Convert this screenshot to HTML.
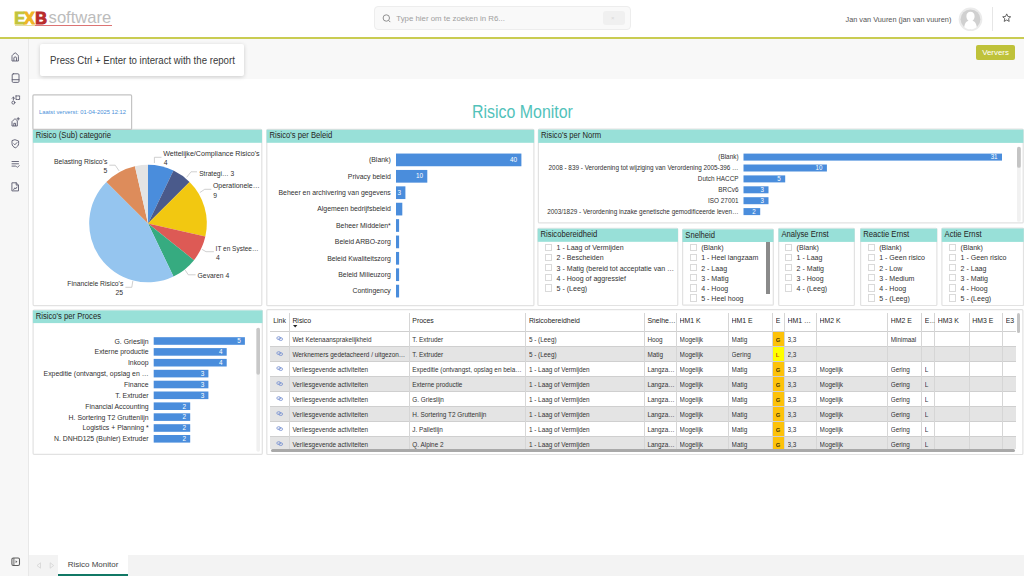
<!DOCTYPE html>
<html><head><meta charset="utf-8">
<style>
*{box-sizing:border-box;margin:0;padding:0}
html,body{width:1024px;height:576px;overflow:hidden;background:#fff;font-family:"Liberation Sans",sans-serif;color:#252423}
.a{position:absolute}
#hdr{left:0;top:0;width:1024px;height:38px;background:#fff}
#gline{left:0;top:37.3px;width:1024px;height:1.6px;background:#c9cc52}
#side{left:0;top:39px;width:29px;height:537px;background:#f7f7f7;border-right:1px solid #e8e8e8}
#band{left:29px;top:39px;width:995px;height:40px;background:#f8f8f8}
#tip{left:40px;top:44px;width:204px;height:32px;background:#fff;box-shadow:0 1px 4px rgba(0,0,0,.18);border-radius:2px;font-size:11px;color:#3a3a3a;line-height:32px;padding-left:9.6px;padding-top:0px;white-space:nowrap}
#btm{left:29px;top:555px;width:995px;height:21px;background:#f3f3f3}
#tab{left:58px;top:555px;width:70px;height:21px;background:#fff;border-bottom:2px solid #117865;font-size:8px;color:#444;text-align:center;line-height:20px}
.pnl{position:absolute;background:#fff;border:1px solid #e3e3e3;}
.ph{position:absolute;left:-1px;top:-1px;right:-1px;height:13.5px;background:#98e0d8;font-size:7.8px;color:#252423;line-height:13.5px;padding-left:2.4px;white-space:nowrap}
.th{font-size:6.9px;color:#252423;white-space:nowrap;overflow:hidden;line-height:12px;height:14px}
.td{font-size:6.4px;color:#333;white-space:nowrap;overflow:hidden;line-height:18.6px;height:15px}
.cb{width:7.3px;height:7.3px;border:1px solid #dadada;background:#fff}
.si{font-size:7.05px;color:#333;white-space:nowrap;line-height:10px}
</style></head><body>
<div id="hdr" class="a"></div>
<div id="gline" class="a"></div>
<div id="side" class="a"></div>
<div id="band" class="a"></div>
<div id="tip" class="a"><span style="display:inline-block;transform:scaleX(0.875);transform-origin:0 50%">Press Ctrl + Enter to interact with the report</span></div>
<div id="btm" class="a"></div>
<div id="tab" class="a">Risico Monitor</div>

<svg class="a" style="left:0;top:0" width="1024" height="576" font-family="Liberation Sans, sans-serif"><rect x="33.10" y="129.40" width="228.70" height="176.20" fill="#fff" stroke="#e2e2e2" stroke-width="1.2" rx="1"/>
<rect x="32.90" y="129.80" width="229.10" height="13.00" fill="#98e0d8"/>
<text x="35.8" y="138.1" font-size="8.30" text-anchor="start" fill="#252423"  textLength="75.26" lengthAdjust="spacingAndGlyphs">Risico (Sub) categorie</text>
<rect x="266.80" y="129.40" width="267.10" height="176.30" fill="#fff" stroke="#e2e2e2" stroke-width="1.2" rx="1"/>
<rect x="266.60" y="129.80" width="267.50" height="13.00" fill="#98e0d8"/>
<text x="269.5" y="138.1" font-size="8.30" text-anchor="start" fill="#252423"  textLength="62.69" lengthAdjust="spacingAndGlyphs">Risico's per Beleid</text>
<rect x="538.40" y="129.20" width="484.80" height="93.70" fill="#fff" stroke="#e2e2e2" stroke-width="1.2" rx="1"/>
<rect x="538.20" y="129.60" width="485.20" height="13.30" fill="#98e0d8"/>
<text x="541.1" y="138.1" font-size="8.30" text-anchor="start" fill="#252423"  textLength="60.12" lengthAdjust="spacingAndGlyphs">Risico's per Norm</text>
<rect x="537.90" y="228.25" width="139.85" height="77.25" fill="#fff" stroke="#e2e2e2" stroke-width="1.2" rx="1"/>
<rect x="537.70" y="228.65" width="140.25" height="13.15" fill="#98e0d8"/>
<text x="540.6" y="237.1" font-size="8.30" text-anchor="start" fill="#252423"  textLength="56.56" lengthAdjust="spacingAndGlyphs">Risicobereidheid</text>
<rect x="682.60" y="229.00" width="90.70" height="76.20" fill="#fff" stroke="#e2e2e2" stroke-width="1.2" rx="1"/>
<rect x="682.40" y="229.40" width="91.10" height="12.60" fill="#98e0d8"/>
<text x="685.3" y="237.5" font-size="8.30" text-anchor="start" fill="#252423"  textLength="29.77" lengthAdjust="spacingAndGlyphs">Snelheid</text>
<rect x="778.70" y="228.25" width="75.70" height="77.25" fill="#fff" stroke="#e2e2e2" stroke-width="1.2" rx="1"/>
<rect x="778.50" y="228.65" width="76.10" height="13.25" fill="#98e0d8"/>
<text x="781.4" y="237.1" font-size="8.30" text-anchor="start" fill="#252423"  textLength="47.2" lengthAdjust="spacingAndGlyphs">Analyse Ernst</text>
<rect x="860.60" y="228.25" width="76.30" height="77.25" fill="#fff" stroke="#e2e2e2" stroke-width="1.2" rx="1"/>
<rect x="860.40" y="228.65" width="76.70" height="13.25" fill="#98e0d8"/>
<text x="863.3" y="237.1" font-size="8.30" text-anchor="start" fill="#252423"  textLength="45.92" lengthAdjust="spacingAndGlyphs">Reactie Ernst</text>
<rect x="941.90" y="228.10" width="81.60" height="77.40" fill="#fff" stroke="#e2e2e2" stroke-width="1.2" rx="1"/>
<rect x="941.70" y="228.50" width="82.00" height="13.40" fill="#98e0d8"/>
<text x="944.6" y="237.0" font-size="8.30" text-anchor="start" fill="#252423"  textLength="36.99" lengthAdjust="spacingAndGlyphs">Actie Ernst</text>
<rect x="33.10" y="310.00" width="229.20" height="144.30" fill="#fff" stroke="#e2e2e2" stroke-width="1.2" rx="1"/>
<rect x="32.90" y="310.40" width="229.60" height="12.70" fill="#98e0d8"/>
<text x="35.8" y="318.6" font-size="8.30" text-anchor="start" fill="#252423"  textLength="65.23" lengthAdjust="spacingAndGlyphs">Risico's per Proces</text>
<rect x="266.80" y="309.70" width="756.10" height="144.80" fill="#fff" stroke="#e2e2e2" stroke-width="1.2" rx="1"/>
<rect x="32.9" y="94.9" width="98.7" height="34.5" fill="#fff" stroke="#c4c4c4" stroke-width="1.2" rx="1"/>
<path d="M148 223.5L148.00 164.70A58.8 58.8 0 0 1 173.51 170.52Z" fill="#4a8ddc"/>
<path d="M148 223.5L173.51 170.52A58.8 58.8 0 0 1 189.58 181.92Z" fill="#4a5a8b"/>
<path d="M148 223.5L189.58 181.92A58.8 58.8 0 0 1 205.33 236.58Z" fill="#f2c811"/>
<path d="M148 223.5L205.33 236.58A58.8 58.8 0 0 1 193.97 260.16Z" fill="#dd5a55"/>
<path d="M148 223.5L193.97 260.16A58.8 58.8 0 0 1 173.51 276.48Z" fill="#36ab80"/>
<path d="M148 223.5L173.51 276.48A58.8 58.8 0 0 1 106.42 181.92Z" fill="#95c5ef"/>
<path d="M148 223.5L106.42 181.92A58.8 58.8 0 0 1 134.92 166.17Z" fill="#dd8c5b"/>
<path d="M148 223.5L134.92 166.17A58.8 58.8 0 0 1 148.00 164.70Z" fill="#e4e4e4"/>
<polyline points="109.3,165.2 115.2,165.2 119.1,170.9" fill="none" stroke="#bbb" stroke-width="0.7"/>
<polyline points="154.4,163 154.4,157.3 161.5,157.3" fill="none" stroke="#bbb" stroke-width="0.7"/>
<polyline points="186.7,177.3 191,171.8 197,171.8" fill="none" stroke="#bbb" stroke-width="0.7"/>
<polyline points="199.8,192.6 204.7,189.3 211.3,189.3" fill="none" stroke="#bbb" stroke-width="0.7"/>
<polyline points="201.9,249.3 206,251.7 213.9,251.7" fill="none" stroke="#bbb" stroke-width="0.7"/>
<polyline points="185.2,270.1 188.3,274.8 195.6,274.8" fill="none" stroke="#bbb" stroke-width="0.7"/>
<polyline points="132.8,281 131.8,287.3 125.4,287.3" fill="none" stroke="#bbb" stroke-width="0.7"/>
<text x="107.4" y="164.0" font-size="7.81" text-anchor="end" fill="#303030"  textLength="53.4" lengthAdjust="spacingAndGlyphs">Belasting Risico's</text>
<text transform="translate(107.40 172.80) scale(0.9091 1)" font-size="7.48" text-anchor="end" fill="#303030" >5</text>
<text x="163.2" y="155.9" font-size="7.81" text-anchor="start" fill="#303030"  textLength="96.4" lengthAdjust="spacingAndGlyphs">Wettelijke/Compliance Risico's</text>
<text transform="translate(163.70 165.20) scale(0.9091 1)" font-size="7.48" text-anchor="start" fill="#303030" >4</text>
<text x="199.2" y="176.0" font-size="7.81" text-anchor="start" fill="#303030"  textLength="35" lengthAdjust="spacingAndGlyphs">Strategi… 3</text>
<text x="212.9" y="187.9" font-size="7.81" text-anchor="start" fill="#303030"  textLength="46.8" lengthAdjust="spacingAndGlyphs">Operationele…</text>
<text transform="translate(213.20 197.50) scale(0.9091 1)" font-size="7.48" text-anchor="start" fill="#303030" >9</text>
<text x="215.6" y="250.8" font-size="7.81" text-anchor="start" fill="#303030"  textLength="42.8" lengthAdjust="spacingAndGlyphs">IT en Systee…</text>
<text transform="translate(215.90 259.70) scale(0.9091 1)" font-size="7.48" text-anchor="start" fill="#303030" >4</text>
<text x="197.6" y="277.9" font-size="7.81" text-anchor="start" fill="#303030"  textLength="31.7" lengthAdjust="spacingAndGlyphs">Gevaren 4</text>
<text x="123.3" y="285.9" font-size="7.81" text-anchor="end" fill="#303030"  textLength="56" lengthAdjust="spacingAndGlyphs">Financiele Risico's</text>
<text transform="translate(123.00 294.70) scale(0.9091 1)" font-size="7.48" text-anchor="end" fill="#303030" >25</text>
<rect x="396" y="153.55" width="125.4" height="12.7" fill="#4a8ddc"/>
<text transform="translate(390.80 162.20) scale(0.9091 1)" font-size="7.59" text-anchor="end" fill="#303030" >(Blank)</text>
<text transform="translate(517.10 162.00) scale(0.9091 1)" font-size="7.04" text-anchor="end" fill="#fff" >40</text>
<rect x="396" y="169.95" width="31.3" height="12.7" fill="#4a8ddc"/>
<text transform="translate(390.80 178.60) scale(0.9091 1)" font-size="7.59" text-anchor="end" fill="#303030" >Privacy beleid</text>
<text transform="translate(423.05 178.40) scale(0.9091 1)" font-size="7.04" text-anchor="end" fill="#fff" >10</text>
<rect x="396" y="186.35" width="9.4" height="12.7" fill="#4a8ddc"/>
<text transform="translate(390.80 195.00) scale(0.9091 1)" font-size="7.59" text-anchor="end" fill="#303030" >Beheer en archivering van gegevens</text>
<text transform="translate(401.10 194.80) scale(0.9091 1)" font-size="7.04" text-anchor="end" fill="#fff" >3</text>
<rect x="396" y="202.75" width="6.3" height="12.7" fill="#4a8ddc"/>
<text transform="translate(390.80 211.40) scale(0.9091 1)" font-size="7.59" text-anchor="end" fill="#303030" >Algemeen bedrijfsbeleid</text>
<rect x="396" y="219.15" width="3.1" height="12.7" fill="#4a8ddc"/>
<text transform="translate(390.80 227.80) scale(0.9091 1)" font-size="7.59" text-anchor="end" fill="#303030" >Beheer Middelen*</text>
<rect x="396" y="235.55" width="3.1" height="12.7" fill="#4a8ddc"/>
<text transform="translate(390.80 244.20) scale(0.9091 1)" font-size="7.59" text-anchor="end" fill="#303030" >Beleid ARBO-zorg</text>
<rect x="396" y="251.95" width="3.1" height="12.7" fill="#4a8ddc"/>
<text transform="translate(390.80 260.60) scale(0.9091 1)" font-size="7.59" text-anchor="end" fill="#303030" >Beleid Kwaliteitszorg</text>
<rect x="396" y="268.35" width="3.1" height="12.7" fill="#4a8ddc"/>
<text transform="translate(390.80 277.00) scale(0.9091 1)" font-size="7.59" text-anchor="end" fill="#303030" >Beleid Milieuzorg</text>
<rect x="396" y="284.75" width="3.1" height="12.7" fill="#4a8ddc"/>
<text transform="translate(390.80 293.40) scale(0.9091 1)" font-size="7.59" text-anchor="end" fill="#303030" >Contingency</text>
<rect x="743.5" y="153.6" width="258.5" height="7" fill="#4a8ddc"/>
<text transform="translate(738.50 159.40) scale(0.9091 1)" font-size="7.02" text-anchor="end" fill="#303030" >(Blank)</text>
<text transform="translate(997.54 159.30) scale(0.9091 1)" font-size="6.82" text-anchor="end" fill="#fff" >31</text>
<rect x="743.5" y="164.5" width="83.4" height="7" fill="#4a8ddc"/>
<text transform="translate(738.50 170.30) scale(0.9091 1)" font-size="7.02" text-anchor="end" fill="#303030" >2008 - 839 - Verordening tot wijziging van Verordening 2005-396 …</text>
<text transform="translate(822.40 170.20) scale(0.9091 1)" font-size="6.82" text-anchor="end" fill="#fff" >10</text>
<rect x="743.5" y="175.4" width="41.7" height="7" fill="#4a8ddc"/>
<text transform="translate(738.50 181.20) scale(0.9091 1)" font-size="7.02" text-anchor="end" fill="#303030" >Dutch HACCP</text>
<text transform="translate(780.70 181.10) scale(0.9091 1)" font-size="6.82" text-anchor="end" fill="#fff" >5</text>
<rect x="743.5" y="186.3" width="25.0" height="7" fill="#4a8ddc"/>
<text transform="translate(738.50 192.10) scale(0.9091 1)" font-size="7.02" text-anchor="end" fill="#303030" >BRCv6</text>
<text transform="translate(764.02 192.00) scale(0.9091 1)" font-size="6.82" text-anchor="end" fill="#fff" >3</text>
<rect x="743.5" y="197.2" width="25.0" height="7" fill="#4a8ddc"/>
<text transform="translate(738.50 203.00) scale(0.9091 1)" font-size="7.02" text-anchor="end" fill="#303030" >ISO 27001</text>
<text transform="translate(764.02 202.90) scale(0.9091 1)" font-size="6.82" text-anchor="end" fill="#fff" >3</text>
<rect x="743.5" y="208.1" width="16.7" height="7" fill="#4a8ddc"/>
<text transform="translate(738.50 213.90) scale(0.9091 1)" font-size="7.02" text-anchor="end" fill="#303030" >2003/1829 - Verordening inzake genetische gemodificeerde leven…</text>
<text transform="translate(755.68 213.80) scale(0.9091 1)" font-size="6.82" text-anchor="end" fill="#fff" >2</text>
<rect x="1017" y="146.8" width="3.8" height="75" rx="1.9" fill="#f1f1f1"/>
<rect x="1017" y="146.8" width="3.8" height="21" rx="1.9" fill="#c4c4c4"/>
<rect x="153.7" y="337.2" width="91.2" height="7.6" fill="#4a8ddc"/>
<text transform="translate(148.60 343.50) scale(0.9091 1)" font-size="7.59" text-anchor="end" fill="#303030" >G. Grieslijn</text>
<text transform="translate(240.70 343.30) scale(0.9091 1)" font-size="7.04" text-anchor="end" fill="#fff" >5</text>
<rect x="153.7" y="348.1" width="73.0" height="7.6" fill="#4a8ddc"/>
<text transform="translate(148.60 354.37) scale(0.9091 1)" font-size="7.59" text-anchor="end" fill="#303030" >Externe productie</text>
<text transform="translate(222.46 354.17) scale(0.9091 1)" font-size="7.04" text-anchor="end" fill="#fff" >4</text>
<rect x="153.7" y="358.9" width="73.0" height="7.6" fill="#4a8ddc"/>
<text transform="translate(148.60 365.24) scale(0.9091 1)" font-size="7.59" text-anchor="end" fill="#303030" >Inkoop</text>
<text transform="translate(222.46 365.04) scale(0.9091 1)" font-size="7.04" text-anchor="end" fill="#fff" >4</text>
<rect x="153.7" y="369.8" width="54.7" height="7.6" fill="#4a8ddc"/>
<text transform="translate(148.60 376.11) scale(0.9091 1)" font-size="7.59" text-anchor="end" fill="#303030" >Expeditie (ontvangst, opslag en …</text>
<text transform="translate(204.22 375.91) scale(0.9091 1)" font-size="7.04" text-anchor="end" fill="#fff" >3</text>
<rect x="153.7" y="380.7" width="54.7" height="7.6" fill="#4a8ddc"/>
<text transform="translate(148.60 386.98) scale(0.9091 1)" font-size="7.59" text-anchor="end" fill="#303030" >Finance</text>
<text transform="translate(204.22 386.78) scale(0.9091 1)" font-size="7.04" text-anchor="end" fill="#fff" >3</text>
<rect x="153.7" y="391.5" width="54.7" height="7.6" fill="#4a8ddc"/>
<text transform="translate(148.60 397.85) scale(0.9091 1)" font-size="7.59" text-anchor="end" fill="#303030" >T. Extruder</text>
<text transform="translate(204.22 397.65) scale(0.9091 1)" font-size="7.04" text-anchor="end" fill="#fff" >3</text>
<rect x="153.7" y="402.4" width="36.5" height="7.6" fill="#4a8ddc"/>
<text transform="translate(148.60 408.72) scale(0.9091 1)" font-size="7.59" text-anchor="end" fill="#303030" >Financial Accounting</text>
<text transform="translate(185.98 408.52) scale(0.9091 1)" font-size="7.04" text-anchor="end" fill="#fff" >2</text>
<rect x="153.7" y="413.3" width="36.5" height="7.6" fill="#4a8ddc"/>
<text transform="translate(148.60 419.59) scale(0.9091 1)" font-size="7.59" text-anchor="end" fill="#303030" >H. Sortering T2 Gruttenlijn</text>
<text transform="translate(185.98 419.39) scale(0.9091 1)" font-size="7.04" text-anchor="end" fill="#fff" >2</text>
<rect x="153.7" y="424.2" width="36.5" height="7.6" fill="#4a8ddc"/>
<text transform="translate(148.60 430.46) scale(0.9091 1)" font-size="7.59" text-anchor="end" fill="#303030" >Logistics + Planning *</text>
<text transform="translate(185.98 430.26) scale(0.9091 1)" font-size="7.04" text-anchor="end" fill="#fff" >2</text>
<rect x="153.7" y="435.0" width="36.5" height="7.6" fill="#4a8ddc"/>
<text transform="translate(148.60 441.33) scale(0.9091 1)" font-size="7.59" text-anchor="end" fill="#303030" >N. DNHD125 (Buhler) Extruder</text>
<text transform="translate(185.98 441.13) scale(0.9091 1)" font-size="7.04" text-anchor="end" fill="#fff" >2</text>
<rect x="256.4" y="327.8" width="3.6" height="124" rx="1.8" fill="#f0f0f0"/>
<rect x="256.4" y="327.8" width="3.6" height="47" rx="1.8" fill="#c8c8c8"/></svg>
<div class="a" style="left:270px;top:310px;width:748px;height:139px;overflow:hidden">
<div class="a" style="left:503.2px;top:21.00px;width:11.3px;height:15.05px;background:#fdc20a"></div>
<div class="a" style="left:0;top:36.05px;width:746px;height:15.05px;background:#e4e4e4"></div>
<div class="a" style="left:503.2px;top:36.05px;width:11.3px;height:15.05px;background:#ffff00"></div>
<div class="a" style="left:503.2px;top:51.10px;width:11.3px;height:15.05px;background:#fdc20a"></div>
<div class="a" style="left:0;top:66.15px;width:746px;height:15.05px;background:#e4e4e4"></div>
<div class="a" style="left:503.2px;top:66.15px;width:11.3px;height:15.05px;background:#fdc20a"></div>
<div class="a" style="left:503.2px;top:81.20px;width:11.3px;height:15.05px;background:#fdc20a"></div>
<div class="a" style="left:0;top:96.25px;width:746px;height:15.05px;background:#e4e4e4"></div>
<div class="a" style="left:503.2px;top:96.25px;width:11.3px;height:15.05px;background:#fdc20a"></div>
<div class="a" style="left:503.2px;top:111.30px;width:11.3px;height:15.05px;background:#fdc20a"></div>
<div class="a" style="left:0;top:126.35px;width:746px;height:15.05px;background:#e4e4e4"></div>
<div class="a" style="left:503.2px;top:126.35px;width:11.3px;height:15.05px;background:#fdc20a"></div>
<div class="a" style="left:0;top:20.50px;width:746px;height:1px;background:#cfcfcf"></div>
<div class="a" style="left:0;top:35.55px;width:746px;height:1px;background:#cfcfcf"></div>
<div class="a" style="left:0;top:50.60px;width:746px;height:1px;background:#cfcfcf"></div>
<div class="a" style="left:0;top:65.65px;width:746px;height:1px;background:#cfcfcf"></div>
<div class="a" style="left:0;top:80.70px;width:746px;height:1px;background:#cfcfcf"></div>
<div class="a" style="left:0;top:95.75px;width:746px;height:1px;background:#cfcfcf"></div>
<div class="a" style="left:0;top:110.80px;width:746px;height:1px;background:#cfcfcf"></div>
<div class="a" style="left:0;top:125.85px;width:746px;height:1px;background:#cfcfcf"></div>
<div class="a" style="left:0;top:140.90px;width:746px;height:1px;background:#cfcfcf"></div>
<div class="a" style="left:18.9px;top:3px;width:1px;height:140px;background:#d6d6d6"></div>
<div class="a" style="left:138.8px;top:3px;width:1px;height:140px;background:#d6d6d6"></div>
<div class="a" style="left:255.4px;top:3px;width:1px;height:140px;background:#d6d6d6"></div>
<div class="a" style="left:373.9px;top:3px;width:1px;height:140px;background:#d6d6d6"></div>
<div class="a" style="left:406.1px;top:3px;width:1px;height:140px;background:#d6d6d6"></div>
<div class="a" style="left:458.1px;top:3px;width:1px;height:140px;background:#d6d6d6"></div>
<div class="a" style="left:502.2px;top:3px;width:1px;height:140px;background:#d6d6d6"></div>
<div class="a" style="left:514.0px;top:3px;width:1px;height:140px;background:#d6d6d6"></div>
<div class="a" style="left:546.1px;top:3px;width:1px;height:140px;background:#d6d6d6"></div>
<div class="a" style="left:617.2px;top:3px;width:1px;height:140px;background:#d6d6d6"></div>
<div class="a" style="left:651.3px;top:3px;width:1px;height:140px;background:#d6d6d6"></div>
<div class="a" style="left:664.3px;top:3px;width:1px;height:140px;background:#d6d6d6"></div>
<div class="a" style="left:698.7px;top:3px;width:1px;height:140px;background:#d6d6d6"></div>
<div class="a" style="left:732.2px;top:3px;width:1px;height:140px;background:#d6d6d6"></div>
<div class="a th" style="left:3.2px;top:4.6px;width:16.2px">Link</div>
<div class="a th" style="left:22.4px;top:4.6px;width:116.9px">Risico</div>
<div class="a th" style="left:142.3px;top:4.6px;width:113.6px">Proces</div>
<div class="a th" style="left:258.9px;top:4.6px;width:115.5px">Risicobereidheid</div>
<div class="a th" style="left:377.4px;top:4.6px;width:29.2px">Snelhe…</div>
<div class="a th" style="left:409.6px;top:4.6px;width:49.0px">HM1 K</div>
<div class="a th" style="left:461.6px;top:4.6px;width:41.1px">HM1 E</div>
<div class="a th" style="left:505.7px;top:4.6px;width:8.8px">E</div>
<div class="a th" style="left:517.5px;top:4.6px;width:29.1px">HM1 …</div>
<div class="a th" style="left:549.6px;top:4.6px;width:68.1px">HM2 K</div>
<div class="a th" style="left:620.7px;top:4.6px;width:31.1px">HM2 E</div>
<div class="a th" style="left:654.8px;top:4.6px;width:10.0px">E…</div>
<div class="a th" style="left:667.8px;top:4.6px;width:31.4px">HM3 K</div>
<div class="a th" style="left:702.2px;top:4.6px;width:30.5px">HM3 E</div>
<div class="a th" style="left:735.7px;top:4.6px;width:10.3px">E3</div>
<svg class="a" style="left:22.600000000000023px;top:14.800000000000011px" width="5" height="3"><path d="M0 0H4.4L2.2 2.6Z" fill="#222"/></svg>
<svg class="a" style="left:6px;top:25.60px" width="8" height="6"><ellipse cx="2.7" cy="2.1" rx="1.9" ry="1.4" fill="none" stroke="#7b93d2" stroke-width="0.85"/><ellipse cx="4.7" cy="3.1" rx="1.9" ry="1.4" fill="none" stroke="#7b93d2" stroke-width="0.85"/></svg>
<div class="a td" style="left:22.4px;top:21.00px;width:116.9px;">Wet Ketenaansprakelijkheid</div>
<div class="a td" style="left:142.3px;top:21.00px;width:113.6px;">T. Extruder</div>
<div class="a td" style="left:258.9px;top:21.00px;width:115.5px;">5 - (Leeg)</div>
<div class="a td" style="left:377.4px;top:21.00px;width:29.2px;">Hoog</div>
<div class="a td" style="left:409.6px;top:21.00px;width:49.0px;">Mogelijk</div>
<div class="a td" style="left:461.6px;top:21.00px;width:41.1px;">Matig</div>
<div class="a td" style="left:505.7px;top:21.00px;width:8.8px;font-size:5.9px;font-weight:bold;color:#4a3a05;">G</div>
<div class="a td" style="left:517.5px;top:21.00px;width:29.1px;">3,3</div>
<div class="a td" style="left:620.7px;top:21.00px;width:31.1px;">Minimaal</div>
<svg class="a" style="left:6px;top:40.65px" width="8" height="6"><ellipse cx="2.7" cy="2.1" rx="1.9" ry="1.4" fill="none" stroke="#7b93d2" stroke-width="0.85"/><ellipse cx="4.7" cy="3.1" rx="1.9" ry="1.4" fill="none" stroke="#7b93d2" stroke-width="0.85"/></svg>
<div class="a td" style="left:22.4px;top:36.05px;width:116.9px;">Werknemers gedetacheerd / uitgezon…</div>
<div class="a td" style="left:142.3px;top:36.05px;width:113.6px;">T. Extruder</div>
<div class="a td" style="left:258.9px;top:36.05px;width:115.5px;">5 - (Leeg)</div>
<div class="a td" style="left:377.4px;top:36.05px;width:29.2px;">Matig</div>
<div class="a td" style="left:409.6px;top:36.05px;width:49.0px;">Mogelijk</div>
<div class="a td" style="left:461.6px;top:36.05px;width:41.1px;">Gering</div>
<div class="a td" style="left:505.7px;top:36.05px;width:8.8px;font-size:5.9px;color:#c65a1a;font-weight:bold;">L</div>
<div class="a td" style="left:517.5px;top:36.05px;width:29.1px;">2,3</div>
<svg class="a" style="left:6px;top:55.70px" width="8" height="6"><ellipse cx="2.7" cy="2.1" rx="1.9" ry="1.4" fill="none" stroke="#7b93d2" stroke-width="0.85"/><ellipse cx="4.7" cy="3.1" rx="1.9" ry="1.4" fill="none" stroke="#7b93d2" stroke-width="0.85"/></svg>
<div class="a td" style="left:22.4px;top:51.10px;width:116.9px;">Verliesgevende activiteiten</div>
<div class="a td" style="left:142.3px;top:51.10px;width:113.6px;">Expeditie (ontvangst, opslag en bela…</div>
<div class="a td" style="left:258.9px;top:51.10px;width:115.5px;">1 - Laag of Vermijden</div>
<div class="a td" style="left:377.4px;top:51.10px;width:29.2px;">Langza…</div>
<div class="a td" style="left:409.6px;top:51.10px;width:49.0px;">Mogelijk</div>
<div class="a td" style="left:461.6px;top:51.10px;width:41.1px;">Matig</div>
<div class="a td" style="left:505.7px;top:51.10px;width:8.8px;font-size:5.9px;font-weight:bold;color:#4a3a05;">G</div>
<div class="a td" style="left:517.5px;top:51.10px;width:29.1px;">3,3</div>
<div class="a td" style="left:549.6px;top:51.10px;width:68.1px;">Mogelijk</div>
<div class="a td" style="left:620.7px;top:51.10px;width:31.1px;">Gering</div>
<div class="a td" style="left:654.8px;top:51.10px;width:10.0px;">L</div>
<svg class="a" style="left:6px;top:70.75px" width="8" height="6"><ellipse cx="2.7" cy="2.1" rx="1.9" ry="1.4" fill="none" stroke="#7b93d2" stroke-width="0.85"/><ellipse cx="4.7" cy="3.1" rx="1.9" ry="1.4" fill="none" stroke="#7b93d2" stroke-width="0.85"/></svg>
<div class="a td" style="left:22.4px;top:66.15px;width:116.9px;">Verliesgevende activiteiten</div>
<div class="a td" style="left:142.3px;top:66.15px;width:113.6px;">Externe productie</div>
<div class="a td" style="left:258.9px;top:66.15px;width:115.5px;">1 - Laag of Vermijden</div>
<div class="a td" style="left:377.4px;top:66.15px;width:29.2px;">Langza…</div>
<div class="a td" style="left:409.6px;top:66.15px;width:49.0px;">Mogelijk</div>
<div class="a td" style="left:461.6px;top:66.15px;width:41.1px;">Matig</div>
<div class="a td" style="left:505.7px;top:66.15px;width:8.8px;font-size:5.9px;font-weight:bold;color:#4a3a05;">G</div>
<div class="a td" style="left:517.5px;top:66.15px;width:29.1px;">3,3</div>
<div class="a td" style="left:549.6px;top:66.15px;width:68.1px;">Mogelijk</div>
<div class="a td" style="left:620.7px;top:66.15px;width:31.1px;">Gering</div>
<div class="a td" style="left:654.8px;top:66.15px;width:10.0px;">L</div>
<svg class="a" style="left:6px;top:85.80px" width="8" height="6"><ellipse cx="2.7" cy="2.1" rx="1.9" ry="1.4" fill="none" stroke="#7b93d2" stroke-width="0.85"/><ellipse cx="4.7" cy="3.1" rx="1.9" ry="1.4" fill="none" stroke="#7b93d2" stroke-width="0.85"/></svg>
<div class="a td" style="left:22.4px;top:81.20px;width:116.9px;">Verliesgevende activiteiten</div>
<div class="a td" style="left:142.3px;top:81.20px;width:113.6px;">G. Grieslijn</div>
<div class="a td" style="left:258.9px;top:81.20px;width:115.5px;">1 - Laag of Vermijden</div>
<div class="a td" style="left:377.4px;top:81.20px;width:29.2px;">Langza…</div>
<div class="a td" style="left:409.6px;top:81.20px;width:49.0px;">Mogelijk</div>
<div class="a td" style="left:461.6px;top:81.20px;width:41.1px;">Matig</div>
<div class="a td" style="left:505.7px;top:81.20px;width:8.8px;font-size:5.9px;font-weight:bold;color:#4a3a05;">G</div>
<div class="a td" style="left:517.5px;top:81.20px;width:29.1px;">3,3</div>
<div class="a td" style="left:549.6px;top:81.20px;width:68.1px;">Mogelijk</div>
<div class="a td" style="left:620.7px;top:81.20px;width:31.1px;">Gering</div>
<div class="a td" style="left:654.8px;top:81.20px;width:10.0px;">L</div>
<svg class="a" style="left:6px;top:100.85px" width="8" height="6"><ellipse cx="2.7" cy="2.1" rx="1.9" ry="1.4" fill="none" stroke="#7b93d2" stroke-width="0.85"/><ellipse cx="4.7" cy="3.1" rx="1.9" ry="1.4" fill="none" stroke="#7b93d2" stroke-width="0.85"/></svg>
<div class="a td" style="left:22.4px;top:96.25px;width:116.9px;">Verliesgevende activiteiten</div>
<div class="a td" style="left:142.3px;top:96.25px;width:113.6px;">H. Sortering T2 Gruttenlijn</div>
<div class="a td" style="left:258.9px;top:96.25px;width:115.5px;">1 - Laag of Vermijden</div>
<div class="a td" style="left:377.4px;top:96.25px;width:29.2px;">Langza…</div>
<div class="a td" style="left:409.6px;top:96.25px;width:49.0px;">Mogelijk</div>
<div class="a td" style="left:461.6px;top:96.25px;width:41.1px;">Matig</div>
<div class="a td" style="left:505.7px;top:96.25px;width:8.8px;font-size:5.9px;font-weight:bold;color:#4a3a05;">G</div>
<div class="a td" style="left:517.5px;top:96.25px;width:29.1px;">3,3</div>
<div class="a td" style="left:549.6px;top:96.25px;width:68.1px;">Mogelijk</div>
<div class="a td" style="left:620.7px;top:96.25px;width:31.1px;">Gering</div>
<div class="a td" style="left:654.8px;top:96.25px;width:10.0px;">L</div>
<svg class="a" style="left:6px;top:115.90px" width="8" height="6"><ellipse cx="2.7" cy="2.1" rx="1.9" ry="1.4" fill="none" stroke="#7b93d2" stroke-width="0.85"/><ellipse cx="4.7" cy="3.1" rx="1.9" ry="1.4" fill="none" stroke="#7b93d2" stroke-width="0.85"/></svg>
<div class="a td" style="left:22.4px;top:111.30px;width:116.9px;">Verliesgevende activiteiten</div>
<div class="a td" style="left:142.3px;top:111.30px;width:113.6px;">J. Palletlijn</div>
<div class="a td" style="left:258.9px;top:111.30px;width:115.5px;">1 - Laag of Vermijden</div>
<div class="a td" style="left:377.4px;top:111.30px;width:29.2px;">Langza…</div>
<div class="a td" style="left:409.6px;top:111.30px;width:49.0px;">Mogelijk</div>
<div class="a td" style="left:461.6px;top:111.30px;width:41.1px;">Matig</div>
<div class="a td" style="left:505.7px;top:111.30px;width:8.8px;font-size:5.9px;font-weight:bold;color:#4a3a05;">G</div>
<div class="a td" style="left:517.5px;top:111.30px;width:29.1px;">3,3</div>
<div class="a td" style="left:549.6px;top:111.30px;width:68.1px;">Mogelijk</div>
<div class="a td" style="left:620.7px;top:111.30px;width:31.1px;">Gering</div>
<div class="a td" style="left:654.8px;top:111.30px;width:10.0px;">L</div>
<svg class="a" style="left:6px;top:130.95px" width="8" height="6"><ellipse cx="2.7" cy="2.1" rx="1.9" ry="1.4" fill="none" stroke="#7b93d2" stroke-width="0.85"/><ellipse cx="4.7" cy="3.1" rx="1.9" ry="1.4" fill="none" stroke="#7b93d2" stroke-width="0.85"/></svg>
<div class="a td" style="left:22.4px;top:126.35px;width:116.9px;">Verliesgevende activiteiten</div>
<div class="a td" style="left:142.3px;top:126.35px;width:113.6px;">Q. Alpine 2</div>
<div class="a td" style="left:258.9px;top:126.35px;width:115.5px;">1 - Laag of Vermijden</div>
<div class="a td" style="left:377.4px;top:126.35px;width:29.2px;">Langza…</div>
<div class="a td" style="left:409.6px;top:126.35px;width:49.0px;">Mogelijk</div>
<div class="a td" style="left:461.6px;top:126.35px;width:41.1px;">Matig</div>
<div class="a td" style="left:505.7px;top:126.35px;width:8.8px;font-size:5.9px;font-weight:bold;color:#4a3a05;">G</div>
<div class="a td" style="left:517.5px;top:126.35px;width:29.1px;">3,3</div>
<div class="a td" style="left:549.6px;top:126.35px;width:68.1px;">Mogelijk</div>
<div class="a td" style="left:620.7px;top:126.35px;width:31.1px;">Gering</div>
<div class="a td" style="left:654.8px;top:126.35px;width:10.0px;">L</div>
</div>
<div class="a" style="left:271px;top:448.6px;width:743.5px;height:3.5px;border-radius:2px;background:#a9a9a9"></div>
<div class="a" style="left:1017px;top:313.3px;width:3.2px;height:20px;border-radius:2px;background:#c4c4c4"></div>
<div class="a cb" style="left:545.0px;top:244.00px"></div>
<div class="a si" style="left:556.6px;top:243.40px">1 - Laag of Vermijden</div>
<div class="a cb" style="left:545.0px;top:254.06px"></div>
<div class="a si" style="left:556.6px;top:253.46px">2 - Bescheiden</div>
<div class="a cb" style="left:545.0px;top:264.12px"></div>
<div class="a si" style="left:556.6px;top:263.52px">3 - Matig (bereid tot acceptatie van …</div>
<div class="a cb" style="left:545.0px;top:274.18px"></div>
<div class="a si" style="left:556.6px;top:273.58px">4 - Hoog of aggressief</div>
<div class="a cb" style="left:545.0px;top:284.24px"></div>
<div class="a si" style="left:556.6px;top:283.64px">5 - (Leeg)</div>
<div class="a cb" style="left:689.6px;top:244.00px"></div>
<div class="a si" style="left:701.2px;top:243.40px">(Blank)</div>
<div class="a cb" style="left:689.6px;top:254.06px"></div>
<div class="a si" style="left:701.2px;top:253.46px">1 - Heel langzaam</div>
<div class="a cb" style="left:689.6px;top:264.12px"></div>
<div class="a si" style="left:701.2px;top:263.52px">2 - Laag</div>
<div class="a cb" style="left:689.6px;top:274.18px"></div>
<div class="a si" style="left:701.2px;top:273.58px">3 - Matig</div>
<div class="a cb" style="left:689.6px;top:284.24px"></div>
<div class="a si" style="left:701.2px;top:283.64px">4 - Hoog</div>
<div class="a cb" style="left:689.6px;top:294.30px"></div>
<div class="a si" style="left:701.2px;top:293.70px">5 - Heel hoog</div>
<div class="a cb" style="left:785.0px;top:244.00px"></div>
<div class="a si" style="left:796.6px;top:243.40px">(Blank)</div>
<div class="a cb" style="left:785.0px;top:254.06px"></div>
<div class="a si" style="left:796.6px;top:253.46px">1 - Laag</div>
<div class="a cb" style="left:785.0px;top:264.12px"></div>
<div class="a si" style="left:796.6px;top:263.52px">2 - Matig</div>
<div class="a cb" style="left:785.0px;top:274.18px"></div>
<div class="a si" style="left:796.6px;top:273.58px">3 - Hoog</div>
<div class="a cb" style="left:785.0px;top:284.24px"></div>
<div class="a si" style="left:796.6px;top:283.64px">4 - (Leeg)</div>
<div class="a cb" style="left:867.6px;top:244.00px"></div>
<div class="a si" style="left:879.2px;top:243.40px">(Blank)</div>
<div class="a cb" style="left:867.6px;top:254.06px"></div>
<div class="a si" style="left:879.2px;top:253.46px">1 - Geen risico</div>
<div class="a cb" style="left:867.6px;top:264.12px"></div>
<div class="a si" style="left:879.2px;top:263.52px">2 - Low</div>
<div class="a cb" style="left:867.6px;top:274.18px"></div>
<div class="a si" style="left:879.2px;top:273.58px">3 - Medium</div>
<div class="a cb" style="left:867.6px;top:284.24px"></div>
<div class="a si" style="left:879.2px;top:283.64px">4 - Hoog</div>
<div class="a cb" style="left:867.6px;top:294.30px"></div>
<div class="a si" style="left:879.2px;top:293.70px">5 - (Leeg)</div>
<div class="a cb" style="left:949.0px;top:244.00px"></div>
<div class="a si" style="left:960.6px;top:243.40px">(Blank)</div>
<div class="a cb" style="left:949.0px;top:254.06px"></div>
<div class="a si" style="left:960.6px;top:253.46px">1 - Geen risico</div>
<div class="a cb" style="left:949.0px;top:264.12px"></div>
<div class="a si" style="left:960.6px;top:263.52px">2 - Laag</div>
<div class="a cb" style="left:949.0px;top:274.18px"></div>
<div class="a si" style="left:960.6px;top:273.58px">3 - Matig</div>
<div class="a cb" style="left:949.0px;top:284.24px"></div>
<div class="a si" style="left:960.6px;top:283.64px">4 - Hoog</div>
<div class="a cb" style="left:949.0px;top:294.30px"></div>
<div class="a si" style="left:960.6px;top:293.70px">5 - (Leeg)</div>
<div class="a" style="left:766.3px;top:242.3px;width:3.7px;height:52.2px;background:#8a8a8a"></div>
<div class="a" style="left:14.3px;top:8px;font-weight:bold;font-size:16.2px;line-height:20px;color:#c3c43c;-webkit-text-stroke:1px #c3c43c">E</div>
<div class="a" style="left:24px;top:8px;font-weight:bold;font-size:16.2px;line-height:20px;color:#efb526;-webkit-text-stroke:1px #efb526">X</div>
<div class="a" style="left:35.3px;top:8px;font-weight:bold;font-size:16.2px;line-height:20px;color:#b92c2c;-webkit-text-stroke:1.1px #b92c2c">B</div>
<div class="a" style="left:48.6px;top:7.6px;font-size:16.6px;line-height:20px;color:#bcbcbc;white-space:nowrap">software</div>
<div class="a" style="left:35px;top:25px;width:77px;height:1px;background:#dc7373"></div>
<div class="a" style="left:15px;top:25px;width:20px;height:1px;background:#e8dd9a"></div>
<div class="a" style="left:374px;top:6px;width:256.5px;height:24px;border-radius:4px;background:#f9f9f9;border:1px solid #ededed"></div>
<svg class="a" style="left:382px;top:13.5px" width="10" height="10"><circle cx="4.3" cy="4" r="3.2" fill="none" stroke="#8a8a8a" stroke-width="0.95"/><path d="M6.6 6.4L8.3 8.1" stroke="#8a8a8a" stroke-width="1"/></svg>
<div class="a" style="left:396.3px;top:13px;font-size:7.85px;line-height:12px;color:#a0a0a0;white-space:nowrap">Type hier om te zoeken in R6...</div>
<div class="a" style="left:602.7px;top:11.3px;width:22px;height:13.7px;border-radius:3px;background:#f0f0f0"></div>
<div class="a" style="left:611px;top:12px;font-size:6px;line-height:12px;color:#d8d8d8">×</div>
<div class="a" style="left:845.5px;top:13.6px;font-size:7.32px;line-height:12px;color:#555;white-space:nowrap">Jan van Vuuren (jan van vuuren)</div>
<svg class="a" style="left:958px;top:6.5px" width="25" height="25"><circle cx="12.5" cy="12.3" r="11.8" fill="#ebebeb"/><circle cx="12.5" cy="12.3" r="9.9" fill="#d0d0d0"/><path d="M12.5 4.8C14.9 4.8 16.6 6.6 16.6 9.2C16.6 11.2 15.7 12.8 14.5 13.7C17 14.4 18.3 16.5 18.8 19.9C17.2 21.4 15 22.2 12.5 22.2S7.8 21.4 6.2 19.9C6.7 16.5 8 14.4 10.5 13.7C9.3 12.8 8.4 11.2 8.4 9.2C8.4 6.6 10.1 4.8 12.5 4.8Z" fill="#fff"/></svg>
<div class="a" style="left:992px;top:7px;width:1px;height:24px;background:#e6e6e6"></div>
<svg class="a" style="left:1002px;top:12.8px" width="10" height="10"><path d="M4.7 0.9L5.9 3.5L8.7 3.8L6.6 5.6L7.2 8.4L4.7 7L2.2 8.4L2.8 5.6L0.7 3.8L3.5 3.5Z" fill="none" stroke="#555" stroke-width="0.9" stroke-linejoin="round"/></svg>
<div class="a" style="left:976px;top:45px;width:39px;height:15px;border-radius:2px;background:#bfc23a;color:#fff;font-size:7.9px;line-height:15px;text-align:center">Ververs</div>
<svg class="a" style="left:10.5px;top:51.8px" width="10" height="10"><path d="M1 8.6V4.4C1 3.6 1.3 3.1 1.9 2.6L4.2 0.8L6.5 2.6C7.1 3.1 7.4 3.6 7.4 4.4V8.6Z" fill="none" stroke="#5a5a6e" stroke-width="0.9" stroke-linejoin="round" stroke-linecap="round"/><path d="M2.9 8.6V6.1C2.9 5.3 3.4 4.9 4.2 4.9S5.5 5.3 5.5 6.1V8.6" fill="none" stroke="#5a5a6e" stroke-width="0.9" stroke-linejoin="round" stroke-linecap="round"/></svg>
<svg class="a" style="left:10.5px;top:73.3px" width="10" height="10"><rect x="1.2" y="0.8" width="6.8" height="8.6" rx="1.1" fill="none" stroke="#5a5a6e" stroke-width="0.9" stroke-linejoin="round" stroke-linecap="round"/><path d="M1.2 6.7H8" fill="none" stroke="#5a5a6e" stroke-width="0.9" stroke-linejoin="round" stroke-linecap="round"/></svg>
<svg class="a" style="left:10.5px;top:94.9px" width="10" height="10"><circle cx="2.4" cy="7.6" r="1.5" fill="none" stroke="#5a5a6e" stroke-width="0.9" stroke-linejoin="round" stroke-linecap="round"/><path d="M2.4 4.9V2.2M1.2 3.3L2.4 2.1L3.6 3.3" fill="none" stroke="#5a5a6e" stroke-width="0.9" stroke-linejoin="round" stroke-linecap="round"/><rect x="5" y="0.9" width="3.6" height="3.6" fill="none" stroke="#5a5a6e" stroke-width="0.9" stroke-linejoin="round" stroke-linecap="round" stroke-dasharray="1.1 0.8"/></svg>
<svg class="a" style="left:10.5px;top:116.7px" width="10" height="10"><path d="M1 8.6V4.6L4 1.6L6.3 3.9V8.6Z" fill="none" stroke="#5a5a6e" stroke-width="0.9" stroke-linejoin="round" stroke-linecap="round"/><path d="M2.8 8.6V6.3H4.5V8.6M7.2 0.6V3M6 1.8H8.4" fill="none" stroke="#5a5a6e" stroke-width="0.9" stroke-linejoin="round" stroke-linecap="round"/></svg>
<svg class="a" style="left:10.5px;top:138.6px" width="10" height="10"><path d="M4.3 0.8L7.6 2V4.6C7.6 6.6 6.1 8.1 4.3 8.8C2.5 8.1 1 6.6 1 4.6V2Z" fill="none" stroke="#5a5a6e" stroke-width="0.9" stroke-linejoin="round" stroke-linecap="round"/><path d="M2.8 4.7L3.9 5.8L5.9 3.6" fill="none" stroke="#5a5a6e" stroke-width="0.9" stroke-linejoin="round" stroke-linecap="round"/></svg>
<svg class="a" style="left:10.5px;top:160.2px" width="10" height="10"><path d="M1 1.5H7.5M1 3.8H7.5M1 6.1H4.5M5.6 6.6L6.4 7.4L8.2 5.6" fill="none" stroke="#5a5a6e" stroke-width="0.9" stroke-linejoin="round" stroke-linecap="round"/></svg>
<svg class="a" style="left:10.5px;top:181.6px" width="10" height="10"><path d="M1.3 0.8H5.2L7.5 3.1V8.9H1.3Z" fill="none" stroke="#5a5a6e" stroke-width="0.9" stroke-linejoin="round" stroke-linecap="round"/><path d="M5.2 0.8V3.1H7.5M2.7 7.6L3.8 5.8L4.9 6.8L6 5" fill="none" stroke="#5a5a6e" stroke-width="0.9" stroke-linejoin="round" stroke-linecap="round"/></svg>
<svg class="a" style="left:10.5px;top:556.5px" width="10" height="10"><rect x="0.9" y="0.9" width="7.6" height="7.6" rx="1.4" fill="none" stroke="#5c5c5c" stroke-width="1.05"/><path d="M2.9 1V8.5" stroke="#5c5c5c" stroke-width="0.9"/><path d="M4.6 3.3L6.4 4.7L4.6 6.1Z" fill="#5c5c5c"/></svg>
<svg class="a" style="left:36px;top:562px" width="6" height="7"><path d="M4.5 0.8L1 3.5L4.5 6.2Z" fill="none" stroke="#d4d4d4" stroke-width="0.8"/></svg>
<svg class="a" style="left:49px;top:562px" width="6" height="7"><path d="M1.2 0.8L4.7 3.5L1.2 6.2Z" fill="none" stroke="#d4d4d4" stroke-width="0.8"/></svg>
<div class="a" style="left:39px;top:107px;font-size:5.8px;line-height:10px;color:#4a8fd9;white-space:nowrap">Laatst ververst: 01-04-2025 12:12</div>
<div class="a" style="left:472px;top:100.5px;font-size:17.6px;line-height:22px;color:#52c2ba;white-space:nowrap;transform:scaleX(0.905);transform-origin:0 0">Risico Monitor</div>
</body></html>
